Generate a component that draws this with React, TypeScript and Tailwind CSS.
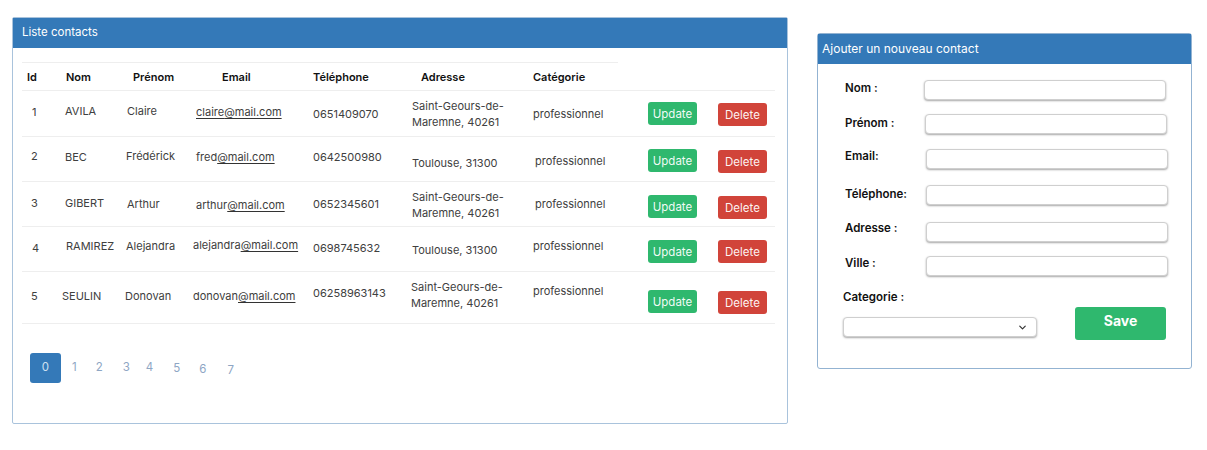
import React from "react";
import { ChevronDown } from "lucide-react";

type Cell = { text: string; cls: string };

type Row = {
  h: string;
  id: Cell;
  nom: Cell;
  prenom: Cell;
  email: { user: string; cls: string; all?: boolean };
  tel: Cell;
  addr: { lines: string[]; cls: string };
  cat: Cell;
  upd: string;
  del: string;
};

const rows: Row[] = [
  {
    h: "h-[46px]",
    id: { text: "1", cls: "pl-[10px] pt-[5px]" },
    nom: { text: "AVILA", cls: "pl-[5px] pt-[4px]" },
    prenom: { text: "Claire", cls: "pl-[5px] pt-[4px]" },
    email: { user: "claire", cls: "pl-[6px] pt-[5px]", all: true },
    tel: { text: "0651409070", cls: "pl-[8px] pt-[7px]" },
    addr: { lines: ["Saint-Geours-de-", "Maremne, 40261"], cls: "pl-[7px] pt-[7px]" },
    cat: { text: "professionnel", cls: "pl-[8px] pt-[7px]" },
    upd: "pt-[11px]",
    del: "pt-[12px]",
  },
  {
    h: "h-[45px]",
    id: { text: "2", cls: "pl-[9px] pt-[3px]" },
    nom: { text: "BEC", cls: "pl-[5px] pt-[4px]" },
    prenom: { text: "Frédérick", cls: "pl-[4px] pt-[3px]" },
    email: { user: "fred", cls: "pl-[6px] pt-[4px]" },
    tel: { text: "0642500980", cls: "pl-[8px] pt-[4px]" },
    addr: { lines: ["Toulouse, 31300"], cls: "pl-[7px] pt-[18px]" },
    cat: { text: "professionnel", cls: "pl-[10px] pt-[8px]" },
    upd: "pt-[12px]",
    del: "pt-[13px]",
  },
  {
    h: "h-[45px]",
    id: { text: "3", cls: "pl-[9px] pt-[5px]" },
    nom: { text: "GIBERT", cls: "pl-[5px] pt-[5px]" },
    prenom: { text: "Arthur", cls: "pl-[5px] pt-[6px]" },
    email: { user: "arthur", cls: "pl-[6px] pt-[7px]" },
    tel: { text: "0652345601", cls: "pl-[8px] pt-[6px]" },
    addr: { lines: ["Saint-Geours-de-", "Maremne, 40261"], cls: "pl-[7px] pt-[7px]" },
    cat: { text: "professionnel", cls: "pl-[10px] pt-[6px]" },
    upd: "pt-[13px]",
    del: "pt-[14px]",
  },
  {
    h: "h-[45px]",
    id: { text: "4", cls: "pl-[10px] pt-[5px]" },
    nom: { text: "RAMIREZ", cls: "pl-[6px] pt-[3px]" },
    prenom: { text: "Alejandra", cls: "pl-[4px] pt-[3px]" },
    email: { user: "alejandra", cls: "pl-[3px] pt-[2px]" },
    tel: { text: "0698745632", cls: "pl-[8px] pt-[5px]" },
    addr: { lines: ["Toulouse, 31300"], cls: "pl-[7px] pt-[15px]" },
    cat: { text: "professionnel", cls: "pl-[8px] pt-[3px]" },
    upd: "pt-[13px]",
    del: "pt-[13px]",
  },
  {
    h: "h-[53px]",
    id: { text: "5", cls: "pl-[9px] pt-[8px]" },
    nom: { text: "SEULIN", cls: "pl-[2px] pt-[8px]" },
    prenom: { text: "Donovan", cls: "pl-[3px] pt-[8px]" },
    email: { user: "donovan", cls: "pl-[3px] pt-[8px]" },
    tel: { text: "06258963143", cls: "pl-[8px] pt-[5px]" },
    addr: { lines: ["Saint-Geours-de-", "Maremne, 40261"], cls: "pl-[6px] pt-[7px]" },
    cat: { text: "professionnel", cls: "pl-[8px] pt-[3px]" },
    upd: "pt-[18px]",
    del: "pt-[19px]",
  },
];

const fields = [
  { label: "Nom :", row: "mt-[16px]", lab: "pt-[2px]", inp: "ml-0" },
  { label: "Prénom :", row: "mt-[14px]", lab: "pt-[3px]", inp: "ml-[1px]" },
  { label: "Email:", row: "mt-[15px]", lab: "pt-[1px]", inp: "ml-[2px]" },
  { label: "Téléphone:", row: "mt-[16px]", lab: "pt-[3px]", inp: "ml-[2px]" },
  { label: "Adresse :", row: "mt-[17px]", lab: "pt-0", inp: "ml-[2px]" },
  { label: "Ville :", row: "mt-[14px]", lab: "pt-[1px]", inp: "ml-[2px]" },
];

function ContactsTable() {
  return (
    <div className="w-[776px] h-[407px] border border-[#a9c3dc] rounded-[2px] bg-white">
      <div className="h-[30px] bg-[#3479b8] text-white text-[11.5px] pl-[9px] flex items-center">
        Liste contacts
      </div>
      <div className="ml-[9px] mt-[14px] w-[753px] text-[11px] leading-[16px] text-[#404040]">
        <div className="flex items-center h-[28px] font-semibold text-[#111] w-[596px] border-t border-[#eeeeee]">
          <div className="w-[38px] pl-[5px]">Id</div>
          <div className="w-[62px] pl-[6px]">Nom</div>
          <div className="w-[68px] pl-[11px]">Prénom</div>
          <div className="w-[115px] pl-[32px]">Email</div>
          <div className="w-[100px] pl-[8px]">Téléphone</div>
          <div className="w-[120px] pl-[16px]">Adresse</div>
          <div className="w-[93px] pl-[8px]">Catégorie</div>
        </div>
        {rows.map((r, i) => (
          <div
            key={i}
            className={`flex items-start border-t border-[#eeeeee] ${r.h} ${
              i === rows.length - 1 ? "border-b" : ""
            }`}
          >
            <div className={`w-[38px] mt-[8px] ${r.id.cls}`}>{r.id.text}</div>
            <div className={`w-[62px] mt-[8px] ${r.nom.cls}`}>{r.nom.text}</div>
            <div className={`w-[68px] mt-[8px] ${r.prenom.cls}`}>{r.prenom.text}</div>
            <div className={`w-[115px] mt-[8px] ${r.email.cls}`}>
              {r.email.all ? (
                <span className="underline decoration-[#333] underline-offset-2">
                  {r.email.user}@mail.com
                </span>
              ) : (
                <span>
                  {r.email.user}
                  <span className="underline decoration-[#333] underline-offset-2">@mail.com</span>
                </span>
              )}
            </div>
            <div className={`w-[100px] mt-[8px] ${r.tel.cls}`}>{r.tel.text}</div>
            <div className={`w-[120px] leading-[16px] ${r.addr.cls}`}>
              {r.addr.lines.map((l) => (
                <div key={l}>{l}</div>
              ))}
            </div>
            <div className={`w-[98px] mt-[8px] ${r.cat.cls}`}>{r.cat.text}</div>
            <div className={`w-[85px] pl-[25px] text-[11.5px] ${r.upd}`}>
              <div className="w-[49px] h-[23px] rounded-[3px] bg-[#2fb86e] text-white/95 flex items-center justify-center">
                Update
              </div>
            </div>
            <div className={`w-[67px] pl-[10px] text-[11.5px] ${r.del}`}>
              <div className="w-[49px] h-[23px] rounded-[3px] bg-[#d1443a] text-white/95 flex items-center justify-center">
                Delete
              </div>
            </div>
          </div>
        ))}
      </div>
      <div className="ml-[17px] mt-[29px] flex items-center text-[11.5px] text-[#8ea6c4]">
        <div className="w-[31px] h-[30px] rounded-[3px] bg-[#3479b8] text-[#cfe0f1] flex items-center justify-center">
          0
        </div>
        <span className="ml-[11px]">1</span>
        <span className="ml-[19px]">2</span>
        <span className="ml-[20px]">3</span>
        <span className="ml-[16px]">4</span>
        <span className="ml-[20px] mt-[2px]">5</span>
        <span className="ml-[19px] mt-[3px]">6</span>
        <span className="ml-[21px] mt-[5px]">7</span>
      </div>
    </div>
  );
}

function ContactForm() {
  return (
    <div className="w-[375px] h-[336px] border border-[#93b3d2] rounded-[3px] bg-white">
      <div className="h-[30px] bg-[#3479b8] text-white text-[12px] pl-[4px] flex items-center">
        Ajouter un nouveau contact
      </div>
      <div className="pl-[27px] text-[11.5px] font-semibold text-[#111]">
        {fields.map((f) => (
          <div key={f.label} className={`flex items-start ${f.row}`}>
            <div className={`w-[79px] leading-[12px] ${f.lab}`}>{f.label}</div>
            <div
              className={`w-[242px] h-[20px] rounded-[4px] border border-[#cfcfcf] bg-white shadow-[0_1px_2px_rgba(0,0,0,0.35)] ${f.inp}`}
            />
          </div>
        ))}
        <div className="flex items-start mt-[13px] -ml-[2px]">
          <div>
            <div className="leading-[16px]">Categorie :</div>
            <div className="mt-[12px] w-[194px] h-[20px] rounded-[4px] border border-[#cfcfcf] bg-white shadow-[0_1px_2px_rgba(0,0,0,0.35)] flex items-center justify-end pr-[8px]">
              <ChevronDown size={11} strokeWidth={2.6} className="text-[#333]" />
            </div>
          </div>
          <div className="ml-[38px] mt-[18px] w-[91px] h-[33px] rounded-[3px] bg-[#2fb86e] text-white text-[14px] font-bold flex justify-center pt-[3px]">
            Save
          </div>
        </div>
      </div>
    </div>
  );
}

export default function App() {
  return (
    <div className="w-[1207px] h-[450px] bg-white font-['Inter',sans-serif] flex items-start pl-[12px] pt-[17px]">
      <ContactsTable />
      <div className="ml-[29px] mt-[16px]">
        <ContactForm />
      </div>
    </div>
  );
}
